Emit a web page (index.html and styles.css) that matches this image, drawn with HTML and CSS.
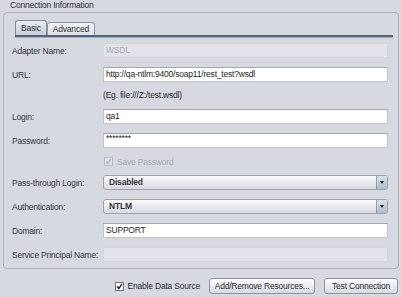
FILE: index.html
```html
<!DOCTYPE html>
<html lang="en">
<head>
  <meta charset="UTF-8">
  <title>Connection Information</title>
  <link rel="stylesheet" href="styles.css">
</head>
<body>
  <div class="title">Connection Information</div>

  <div class="group">
    <!-- Tabs -->
    <div class="tabs">
      <div class="tab active">Basic</div>
      <div class="tab">Advanced</div>
    </div>

    <!-- Basic form -->
    <div class="form">
      <label>Adapter Name:</label>
      <div class="field disabled">WSDL</div>

      <label>URL:</label>
      <div class="field">http://qa-ntlm:9400/soap11/rest_test?wsdl</div>

      <span></span>
      <div class="hint">(Eg. file:///Z:/test.wsdl)</div>

      <label>Login:</label>
      <div class="field">qa1</div>

      <label>Password:</label>
      <div class="field pwd">********</div>

      <span></span>
      <div class="check off">
        <svg class="box" width="9" height="9" viewBox="0 0 9 9"><rect x="0.5" y="0.5" width="8" height="8" fill="#dfe1e6" stroke="#b9bcc2"/><path d="M2 4.5 L3.8 6.5 L7 2" fill="none" stroke="#b2b5bb" stroke-width="1.3"/></svg>
        Save Password
      </div>

      <label>Pass-through Login:</label>
      <div class="select"><span>Disabled</span><i></i></div>

      <label>Authentication:</label>
      <div class="select"><span>NTLM</span><i></i></div>

      <label>Domain:</label>
      <div class="field">SUPPORT</div>

      <label>Service Principal Name:</label>
      <div class="field disabled"></div>
    </div>
  </div>

  <div class="footer">
    <div class="check">
      <svg class="box" width="9" height="9" viewBox="0 0 9 9"><rect x="0.5" y="0.5" width="8" height="8" fill="#fff" stroke="#6f747c"/><path d="M2 4.5 L3.8 6.5 L7 1.8" fill="none" stroke="#222" stroke-width="1.4"/></svg>
      Enable Data Source
    </div>
    <button class="add">Add/Remove Resources...</button>
    <button class="test">Test Connection</button>
  </div>
</body>
</html>
```
FILE: styles.css
```css
body {
  margin: 0;
  background: #d6d9e0;
  font-family: "Liberation Sans", Arial, sans-serif;
  font-size: 8.5px;
  letter-spacing: -0.2px;
  color: #2a2c30;
}
.title {
  height: 12px;
  line-height: 11px;
  padding-left: 10px;
  color: #2f3236;
}
.group {
  margin: 0 2px 0 3px;
  border: 1px solid #aeb2b9;
  border-radius: 4px;
  padding: 0 10px 6px 8px;
}
.tabs {
  display: flex;
  align-items: flex-end;
  margin: 7px -5px 0 3px;
  border-bottom: 2px solid #56647a;
  box-shadow: 0 1px 0 #a7b1c0;
}
.tab {
  height: 12px;
  line-height: 12px;
  padding: 0 5px;
  border: 1px solid #8c95a3;
  border-bottom: none;
  border-radius: 3px 3px 0 0;
  background: linear-gradient(#f1f2f5, #dfe2e7);
  color: #2d2f33;
}
.tab.active {
  height: 14px;
  line-height: 15px;
  background: linear-gradient(#e9ecf1, #c9d0db);
  border-color: #7f8a9b;
}
.form {
  display: grid;
  grid-template-columns: 91px 1fr;
  row-gap: 9px;
  align-items: center;
  margin-top: 6px;
}
.form label {
  color: #34373c;
}
.field {
  height: 13px;
  line-height: 13px;
  padding: 0 2px;
  background: #fff;
  border: 1px solid #c2c5cb;
  border-top-color: #a3a6ac;
  color: #1e1f22;
}
.field.disabled {
  background: #e1e3e8;
  border-color: #d4d7dc;
  color: #a9acb2;
}
.field.pwd {
  line-height: 9px;
}
.hint {
  height: 9px;
  line-height: 9px;
}
.check {
  display: flex;
  align-items: center;
  gap: 4px;
  height: 9px;
  white-space: nowrap;
}
.check.off {
  color: #a9acb2;
  padding-left: 1px;
}
.select {
  display: flex;
  height: 13px;
  border: 1px solid #9da1a8;
  border-radius: 3px;
  background: linear-gradient(#fbfbfc, #e4e6ea 60%, #d6d9de);
  font-weight: bold;
  color: #34363a;
}
.select span {
  flex: 1;
  line-height: 13px;
  padding-left: 5px;
}
.select i {
  width: 10px;
  border-left: 1px solid #8f9aaa;
  border-radius: 0 2px 2px 0;
  background: linear-gradient(#d9e2ec, #aebccd);
  position: relative;
}
.select i::after {
  content: "";
  position: absolute;
  left: 3px;
  top: 5px;
  border-left: 2px solid transparent;
  border-right: 2px solid transparent;
  border-top: 3px solid #222;
}
.footer {
  display: flex;
  justify-content: flex-end;
  align-items: center;
  padding: 9px 3px 0 0;
}
.footer .check {
  margin-right: 9px;
}
button {
  height: 16px;
  padding: 0;
  white-space: nowrap;
  font-family: inherit;
  font-size: inherit;
  letter-spacing: inherit;
  color: #2b2d31;
  border: 1px solid #8e9299;
  border-radius: 3px;
  background: linear-gradient(#fdfdfe, #e6e8ec 60%, #d7dadf);
}
.add {
  width: 106px;
  margin-right: 9px;
}
.test {
  width: 74px;
}
```
